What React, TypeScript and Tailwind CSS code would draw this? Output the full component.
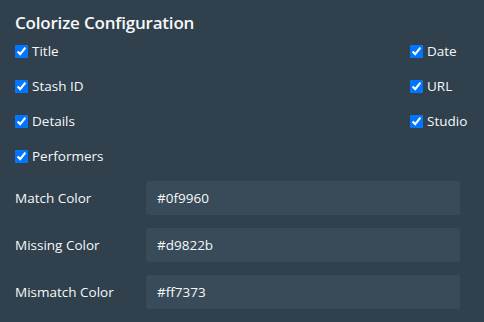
import { useState } from 'react';

const leftOpts = ['Title', 'Stash ID', 'Details', 'Performers'];
const rightOpts = ['Date', 'URL', 'Studio'];

const colors = [
  { label: 'Match Color', value: '#0f9960' },
  { label: 'Missing Color', value: '#d9822b' },
  { label: 'Mismatch Color', value: '#ff7373' },
];

function Check({ label }: { label: string }) {
  return (
    <label className="flex h-[35px] items-center gap-[4px] text-[13.5px] text-[#f5f8fa]">
      <input type="checkbox" defaultChecked className="m-0 h-[13px] w-[13px] accent-[#0075ff]" />
      <span>{label}</span>
    </label>
  );
}

export default function App() {
  const [vals, setVals] = useState(colors.map((c) => c.value));

  return (
    <div
      className="h-[322px] w-[484px] bg-[#30404d] px-[15px] pt-[11px] text-[#f5f8fa]"
      style={{ fontFamily: '"Open Sans", "Noto Sans", sans-serif' }}
    >
      <h2 className="text-[17px] font-semibold leading-[24px] tracking-[-0.2px]">Colorize Configuration</h2>
      <div className="mt-[-1px] grid grid-cols-[1fr_59px]">
        <div className="flex flex-col">
          {leftOpts.map((o) => (
            <Check key={o} label={o} />
          ))}
        </div>
        <div className="flex flex-col">
          {rightOpts.map((o) => (
            <Check key={o} label={o} />
          ))}
        </div>
      </div>
      <div className="mt-[7px] flex flex-col gap-[13px] pr-[9px]">
        {colors.map((c, i) => (
          <div key={c.label} className="flex items-center">
            <span className="w-[131px] text-[13.5px]">{c.label}</span>
            <input
              value={vals[i]}
              onChange={(e) => setVals(vals.map((v, j) => (j === i ? e.target.value : v)))}
              className="h-[34px] flex-1 rounded-[3px] bg-[#394b59] px-[11px] text-[13.5px] text-[#f5f8fa] outline-none"
            />
          </div>
        ))}
      </div>
    </div>
  );
}
